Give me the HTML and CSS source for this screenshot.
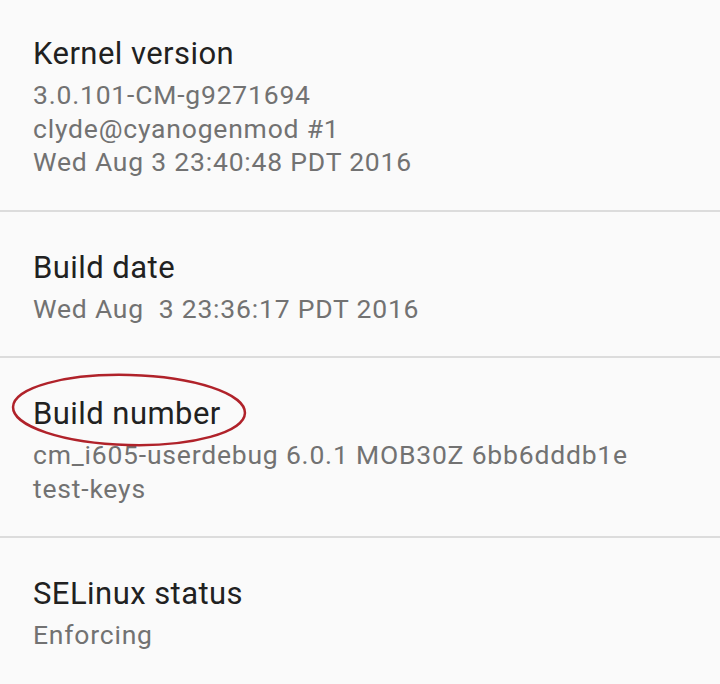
FILE: index.html
```html
<!DOCTYPE html>
<html lang="en">
<head>
  <meta charset="UTF-8">
  <meta name="viewport" content="width=device-width, initial-scale=1.0">
  <title>About phone</title>
  <link rel="stylesheet" href="styles.css">
</head>
<body>
  <div class="list">
    <div class="item">
      <div class="title">Kernel version</div>
      <div class="summary">3.0.101-CM-g9271694<br>clyde@cyanogenmod #1<br>Wed Aug 3 23:40:48 PDT 2016</div>
    </div>

    <div class="item">
      <div class="title">Build date</div>
      <div class="summary">Wed Aug&nbsp; 3 23:36:17 PDT 2016</div>
    </div>

    <div class="item marked">
      <div class="title">Build number</div>
      <div class="summary">cm_i605-userdebug 6.0.1 MOB30Z 6bb6dddb1e<br>test-keys</div>
      <svg class="circle" width="250" height="80" viewBox="0 0 250 80">
        <ellipse cx="129" cy="40" rx="116" ry="35" transform="rotate(1.5 129 40)" />
      </svg>
    </div>

    <div class="item">
      <div class="title">SELinux status</div>
      <div class="summary">Enforcing</div>
    </div>
  </div>
</body>
</html>
```

FILE: styles.css
```css
body {
  margin: 0;
  background-color: #fafafa;
  font-family: Roboto, "Noto Sans", Arial, sans-serif;
  overflow: hidden;
}

.list {
  margin-top: -2px;
}

.item {
  position: relative;
  padding: 38px 33px 31px 33px;
  border-bottom: 2px solid #dcdcdc;
}

.item:last-child {
  border-bottom: none;
}

.title {
  font-size: 31px;
  letter-spacing: 0.45px;
  line-height: 36px;
  color: #212121;
  margin-bottom: 6px;
}

.summary {
  font-size: 26.5px;
  letter-spacing: 0.8px;
  line-height: 33.5px;
  color: #727272;
}

.circle {
  position: absolute;
  left: 0;
  top: 12px;
  fill: none;
  stroke: #b0222a;
  stroke-width: 2.5;
}
```
